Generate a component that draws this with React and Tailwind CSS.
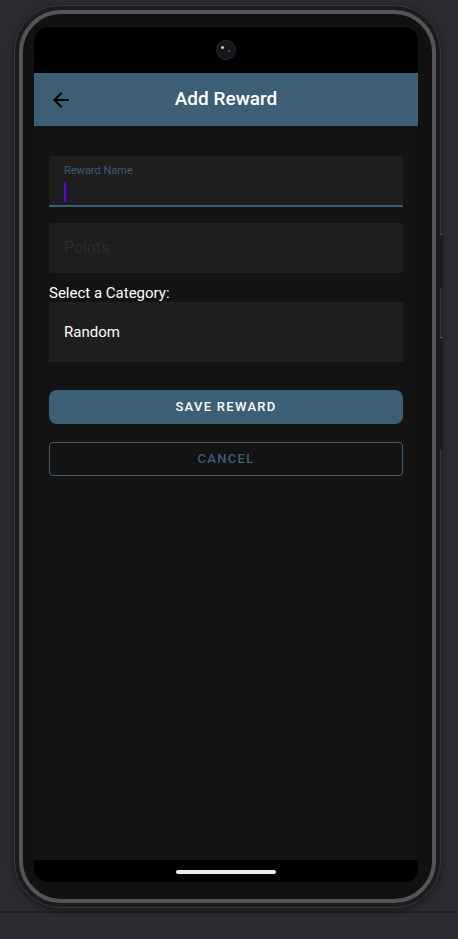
export default function App() {
  return (
    <div className="w-[458px] h-[939px] bg-[#2b2c31] overflow-hidden font-['Roboto',sans-serif]">
      <div className="relative pt-[5px] pl-[14px]">
        {/* side buttons */}
        <div className="absolute left-[440px] top-[234px] w-[3px] h-[54px] rounded-sm bg-[#1c1c1f] border-t border-[#6a6a6a]" />
        <div className="absolute left-[440px] top-[337px] w-[3px] h-[113px] rounded-sm bg-[#1c1c1f] border-t border-[#6a6a6a]" />

        <div className="w-[427px] h-[903px] rounded-[46px] border border-[#3a3a3c] bg-[#1c1c1e] p-[4px] shadow-[0_2px_6px_rgba(0,0,0,0.5)]">
          <div className="w-full h-full rounded-[42px] border-[4px] border-[#555557] bg-[#111112]">
            <div className="pt-[13px] pl-[11px]">
              <Screen />
            </div>
          </div>
        </div>
      </div>
      <div className="mt-[3px] border-t-2 border-[#1f2024]" />
    </div>
  );
}

function Screen() {
  return (
    <div className="w-[384px] h-[855px] rounded-[14px] bg-black overflow-hidden flex flex-col">
      <div className="h-[46px] flex justify-center pt-[13px]">
        <div className="w-[20px] h-[20px] rounded-full bg-[#15171a] border border-[#26282c] relative">
          <div className="absolute left-[4px] top-[5px] w-[3px] h-[3px] rounded-full bg-[#b5d3c8]" />
          <div className="absolute left-[11px] top-[9px] w-[2px] h-[2px] rounded-full bg-[#3f6fa0]" />
        </div>
      </div>

      <div className="h-[53px] bg-[#3c5f75] flex items-center relative">
        <svg className="absolute left-[15px]" width="24" height="24" viewBox="0 0 24 24">
          <path d="M20 11H7.83l5.59-5.59L12 4l-8 8 8 8 1.41-1.41L7.83 13H20v-2z" fill="#000" />
        </svg>
        <div className="w-full text-center text-white text-[19px] font-medium">Add Reward</div>
      </div>

      <div className="flex-1 bg-[#131313] px-[15px] pt-[30px] flex flex-col">
        <div className="h-[51px] bg-[#1e1e1e] rounded-t-[4px] border-b-2 border-[#3c5f75] px-[15px] pt-[8px]">
          <div className="text-[11px] leading-[14px] text-[#3c5f75]">Reward Name</div>
          <div className="mt-[4px] w-[2px] h-[20px] bg-[#6200ee]" />
        </div>

        <div className="mt-[16px] h-[50px] bg-[#1e1e1e] rounded-t-[4px] px-[15px] flex items-center">
          <span className="text-[16px] text-[#2c2c2c]">Points</span>
        </div>

        <div className="mt-[11px] text-[15px] leading-[18px] text-white">Select a Category:</div>

        <div className="h-[60px] bg-[#1e1e1e] px-[15px] flex items-center">
          <span className="text-[15px] text-white">Random</span>
        </div>

        <button className="mt-[28px] h-[34px] rounded-[8px] bg-[#3c5f75] text-white text-[13px] font-medium tracking-[1.3px]">
          SAVE REWARD
        </button>

        <button className="mt-[18px] h-[34px] rounded-[4px] border border-[#3c5f75] text-[#3c5f75] text-[13px] font-medium tracking-[1.3px]">
          CANCEL
        </button>
      </div>

      <div className="h-[22px] bg-black flex justify-center pt-[10px]">
        <div className="w-[100px] h-[4px] rounded-full bg-[#eeeeee]" />
      </div>
    </div>
  );
}
